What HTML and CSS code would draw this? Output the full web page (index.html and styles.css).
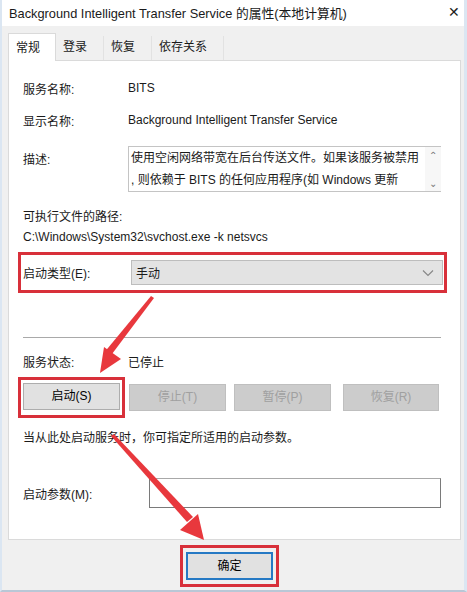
FILE: index.html
```html
<!DOCTYPE html>
<html lang="zh-CN">
<head>
    <meta charset="UTF-8">
    <title>BITS 的属性</title>
    <link rel="stylesheet" href="styles.css">
</head>
<body>
    <div class="win">
        <div class="titleBar">
            <span>Background Intelligent Transfer Service 的属性(本地计算机)</span>
            <span class="close">✕</span>
        </div>
        <div class="tabs">
            <span class="tab on">常规</span>
            <span class="tab">登录</span>
            <span class="tab">恢复</span>
            <span class="tab">依存关系</span>
        </div>
        <div class="panel">
            <div class="row r1">
                <span class="lab">服务名称:</span>
                <span>BITS</span>
            </div>
            <div class="row r2">
                <span class="lab">显示名称:</span>
                <span>Background Intelligent Transfer Service</span>
            </div>
            <div class="row desc">
                <span class="lab">描述:</span>
                <div class="descBox">
                    <p>使用空闲网络带宽在后台传送文件。如果该服务被禁用<br>, 则依赖于 BITS 的任何应用程序(如 Windows 更新</p>
                    <div class="scroll">
                        <span>&#8963;</span>
                        <span>&#8964;</span>
                    </div>
                </div>
            </div>
            <div class="pathLab">可执行文件的路径:</div>
            <div class="path">C:\Windows\System32\svchost.exe -k netsvcs</div>
            <div class="redBox startType">
                <span class="lab">启动类型(E):</span>
                <div class="select">
                    <span>手动</span>
                    <svg width="12" height="8" viewBox="0 0 12 8"><path d="M1 1.5 L6 6.5 L11 1.5" fill="none" stroke="#888" stroke-width="1.2"/></svg>
                </div>
            </div>
            <div class="sep"></div>
            <div class="row status">
                <span class="lab">服务状态:</span>
                <span>已停止</span>
            </div>
            <div class="btnRow">
                <div class="redBox startBox">
                    <a href="javascript:;" class="btn">启动(S)</a>
                </div>
                <a href="javascript:;" class="btn off">停止(T)</a>
                <a href="javascript:;" class="btn off">暂停(P)</a>
                <a href="javascript:;" class="btn off">恢复(R)</a>
            </div>
            <div class="hint">当从此处启动服务时，你可指定所适用的启动参数。</div>
            <div class="row param">
                <span class="lab">启动参数(M):</span>
                <div class="input"></div>
            </div>
        </div>
        <div class="foot">
            <div class="redBox okBox">
                <a href="javascript:;" class="btn ok">确定</a>
            </div>
        </div>
        <svg class="arrows" width="467" height="592" viewBox="0 0 467 592">
            <polygon points="151,296 154,298 109,358 103,354" fill="#e8383d"/>
            <polygon points="100,373 121,359 104,347" fill="#e8383d"/>
            <polygon points="111,436 114,434 193,517 187,522" fill="#e8383d"/>
            <polygon points="204,540 198,514 180,530" fill="#e8383d"/>
        </svg>
    </div>
</body>
</html>
```

FILE: styles.css
```css
*{
    margin: 0;
    padding: 0;
    box-sizing: border-box;
}
a{
    text-decoration: none;
    color: #000;
}
body{
    background: #fff;
    font-family: "Liberation Sans", "Noto Sans CJK SC", sans-serif;
    font-size: 12px;
    color: #1a1a1a;
}
.win{
    position: relative;
    width: 467px;
    height: 592px;
    background: #f0f0f0;
    border-left: 2px solid #dbe6f2;
    border-right: 3px solid #dbe6f2;
    border-bottom: 2px solid #b9c7d6;
}
.titleBar{
    height: 26px;
    background: #fff;
    display: flex;
    justify-content: space-between;
    align-items: center;
    padding: 0 4px 2px 7px;
    font-size: 12.8px;
}
.titleBar .close{
    font-size: 14px;
    font-weight: 300;
    color: #222;
}
.tabs{
    display: flex;
    margin-top: 7px;
    padding-left: 6px;
    height: 27px;
    align-items: flex-end;
}
.tab{
    height: 24px;
    line-height: 22px;
    padding: 0 16px 0 7px;
    border-right: 1px solid #e2e2e2;
}
.tab.on{
    height: 28px;
    line-height: 28px;
    background: #fff;
    border: 1px solid #dadada;
    border-bottom: none;
    padding: 0 15px 0 7px;
    margin-bottom: -1px;
    position: relative;
}
.panel{
    margin: 0 3px 0 6px;
    height: 480px;
    background: #fff;
    border: 1px solid #dadada;
    padding: 0 19px 0 14px;
}
.row{
    display: flex;
    align-items: center;
    height: 20px;
}
.lab{
    width: 105px;
    flex-shrink: 0;
}
.r1{ margin-top: 17px; }
.r2{ margin-top: 12px; }
.desc{
    margin-top: 16px;
    height: 46px;
    align-items: flex-start;
}
.desc .lab{
    padding-top: 4px;
}
.descBox{
    flex: 1;
    height: 46px;
    border: 1px solid #c4c4c4;
    border-right: none;
    display: flex;
}
.descBox p{
    flex: 1;
    line-height: 22px;
    padding: 0 0 0 2px;
    white-space: nowrap;
    overflow: hidden;
}
.scroll{
    width: 16px;
    display: flex;
    flex-direction: column;
    justify-content: space-between;
    align-items: center;
    color: #777;
    font-size: 10px;
    padding: 3px 0 2px;
    background: #f7f7f7;
}
.pathLab{
    margin-top: 15px;
    height: 20px;
    line-height: 20px;
}
.path{
    height: 20px;
    line-height: 20px;
}
.redBox{
    border: 3px solid #d8303a;
}
.startType{
    display: flex;
    align-items: center;
    margin: 5px -6px 0 -5px;
    height: 41px;
    padding-left: 2px;
}
.startType .lab{
    width: 108px;
}
.select{
    width: 312px;
    height: 25px;
    background: #e3e3e3;
    border: 1px solid #bdbdbd;
    display: flex;
    justify-content: space-between;
    align-items: center;
    padding: 0 8px 0 4px;
}
.sep{
    margin-top: 44px;
    border-top: 1px solid #a9a9a9;
}
.status{
    margin-top: 13px;
}
.btnRow{
    display: flex;
    align-items: center;
    margin: 6px 0 0 -5px;
}
.startBox{
    width: 107px;
    height: 41px;
    padding: 3px 2px;
}
.btn{
    display: block;
    width: 97px;
    height: 27px;
    line-height: 25px;
    text-align: center;
    background: #e1e1e1;
    border: 1px solid #adadad;
}
.btn.off{
    background: #cccccc;
    border-color: #bfbfbf;
    color: #a0a0a0;
}
.btnRow .off:nth-child(2){ margin-left: 4px; }
.btnRow .off:nth-child(3){ margin-left: 8px; }
.btnRow .off:nth-child(4){ margin-left: 12px; width: 96px; }
.hint{
    margin-top: 10px;
    height: 20px;
    line-height: 20px;
}
.param{
    margin-top: 30px;
    height: 30px;
}
.param .lab{
    width: 126px;
}
.input{
    flex: 1;
    height: 30px;
    border: 1px solid #7a7a7a;
    border-top-color: #a8a8a8;
}
.foot{
    display: flex;
    padding: 5px 0 0 178px;
}
.okBox{
    width: 99px;
    height: 42px;
    padding: 4px 3px;
}
.btn.ok{
    width: 87px;
    height: 28px;
    border: 2px solid #2579c4;
    background: #e1e1e1;
    line-height: 24px;
}
.arrows{
    position: absolute;
    left: -2px;
    top: 0;
    pointer-events: none;
}
```
